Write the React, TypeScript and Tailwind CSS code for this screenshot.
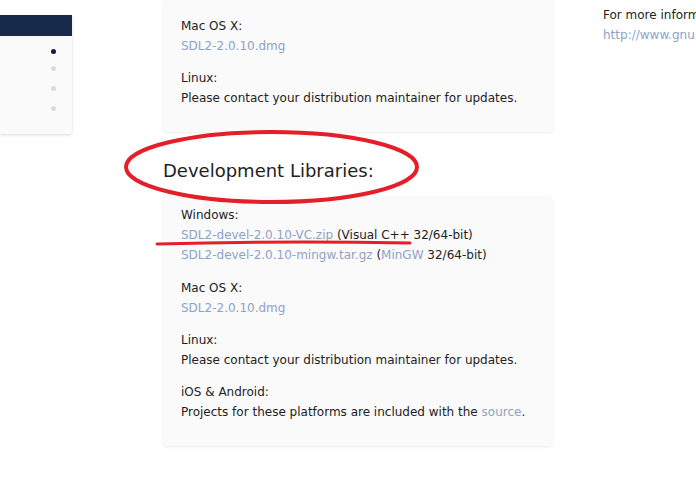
import React from "react";

const Link = ({ children }: { children: React.ReactNode }) => (
  <span className="text-[#8ea2c6]">{children}</span>
);

export default function App() {
  return (
    <div
      className="relative w-[696px] h-[491px] overflow-hidden bg-white flex text-[#222]"
      style={{ fontFamily: '"DejaVu Sans", Verdana, sans-serif' }}
    >
      {/* left sidebar */}
      <div className="w-[163px] shrink-0 pt-[15px]">
        <div className="w-[72px] rounded-br-[3px] bg-[#fafafa] shadow-[0_1px_3px_rgba(0,0,0,0.15)]">
          <div className="h-[21px] bg-[#172a4a]" />
          <div className="h-[98px] flex flex-col items-end pr-[16px] pt-[13px]">
            <div className="w-[5px] h-[5px] rounded-full bg-[#14154a]" />
            <div className="mt-[12px] w-[5px] h-[5px] rounded-full bg-[#dcdcdc]" />
            <div className="mt-[15px] w-[5px] h-[5px] rounded-full bg-[#dcdcdc]" />
            <div className="mt-[15px] w-[5px] h-[5px] rounded-full bg-[#dcdcdc]" />
          </div>
        </div>
      </div>

      {/* center column */}
      <div className="w-[390px] shrink-0 flex flex-col">
        <div className="bg-[#fafafa] rounded-b-[4px] shadow-[0_1px_3px_rgba(0,0,0,0.08)] px-[18px] pt-[16px] pb-[24px] text-[12px] leading-[20px]">
          <div>Mac OS X:</div>
          <div><Link>SDL2-2.0.10.dmg</Link></div>
          <div className="mt-[12px]">Linux:</div>
          <div>Please contact your distribution maintainer for updates.</div>
        </div>

        <div className="h-[64px] pt-[27px] text-[18px] leading-[24px]">
          Development Libraries:
        </div>

        <div className="bg-[#fafafa] rounded-[4px] shadow-[0_1px_3px_rgba(0,0,0,0.08)] px-[18px] pt-[9px] pb-[24px] text-[12px] leading-[20px]">
          <div>Windows:</div>
          <div>
            <Link>SDL2-devel-2.0.10-VC.zip</Link> (Visual C++ 32/64-bit)
          </div>
          <div>
            <Link>SDL2-devel-2.0.10-mingw.tar.gz</Link> (<Link>MinGW</Link> 32/64-bit)
          </div>
          <div className="mt-[13px]">Mac OS X:</div>
          <div><Link>SDL2-2.0.10.dmg</Link></div>
          <div className="mt-[12px]">Linux:</div>
          <div>Please contact your distribution maintainer for updates.</div>
          <div className="mt-[12px]">iOS &amp; Android:</div>
          <div>
            Projects for these platforms are included with the <Link>source</Link>.
          </div>
        </div>
      </div>

      {/* right column */}
      <div className="pl-[50px] pt-[5px] text-[12px] leading-[20px] whitespace-nowrap">
        <div>For more information about</div>
        <div><Link>http://www.gnu.org/licenses</Link></div>
      </div>

      {/* annotations */}
      <svg className="absolute left-0 top-0 pointer-events-none" width="696" height="491">
        <ellipse cx="271.5" cy="167" rx="145.5" ry="35" fill="none" stroke="#e51f2a" strokeWidth="4" />
        <path d="M157 244 Q 283 240.5 410 243" fill="none" stroke="#e51f2a" strokeWidth="3" strokeLinecap="round" />
      </svg>
    </div>
  );
}
